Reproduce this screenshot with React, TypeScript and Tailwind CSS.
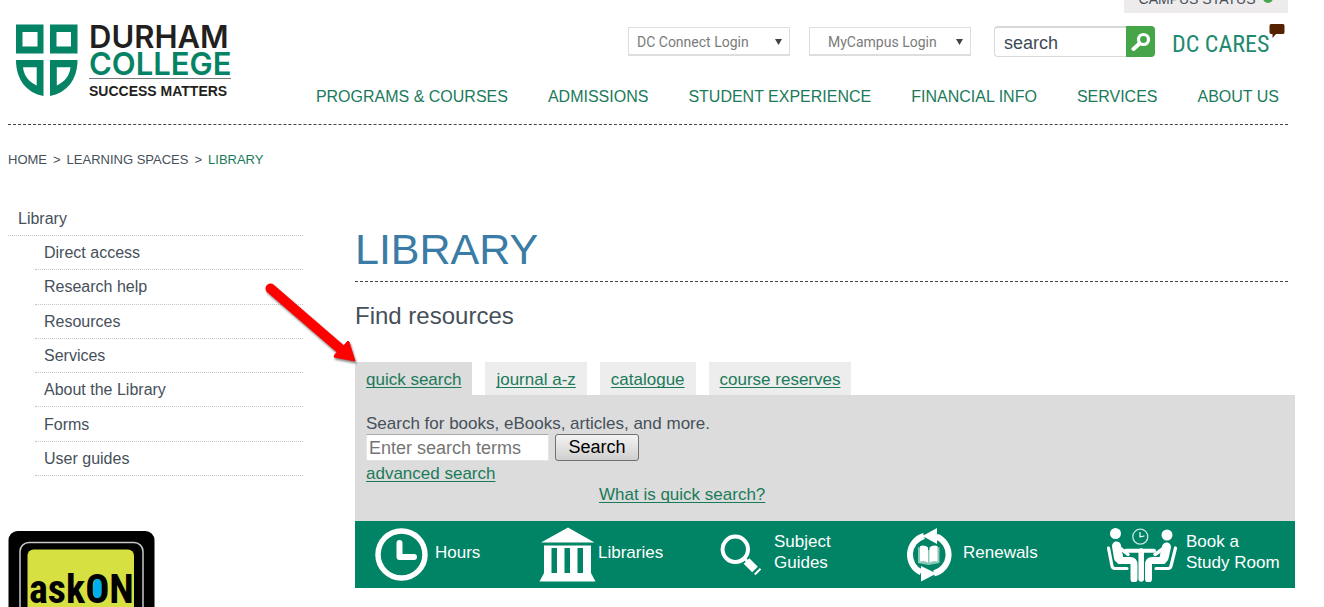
import type { ReactNode } from "react";

const navLinks = [
  "PROGRAMS & COURSES",
  "ADMISSIONS",
  "STUDENT EXPERIENCE",
  "FINANCIAL INFO",
  "SERVICES",
  "ABOUT US",
];

const sideLinks = [
  "Direct access",
  "Research help",
  "Resources",
  "Services",
  "About the Library",
  "Forms",
  "User guides",
];

const tabs = ["quick search", "journal a-z", "catalogue", "course reserves"];

const linkClass =
  "text-[#1b7a5a] underline underline-offset-2 [text-decoration-skip-ink:none]";

function Logo() {
  return (
    <a href="#" className="ml-[7px] mt-[10px] flex gap-[10px]">
      <svg width="64" height="74" viewBox="0 0 64 74" className="mt-px" fill="#058465" fillRule="evenodd">
        <path d="M1 0.5H28.5V29.5H1zM7.5 8V22.5H22.5V8z" />
        <path d="M35 0.5H62.5V29.5H35zM41.5 8V22.5H56V8z" />
        <path d="M1 36H28.5V72C12 69 1 56 1 36zM8 43.3C9 52 14 58 21.7 61.5V43.3z" />
        <path d="M62.5 36H35V72C51.5 69 62.5 56 62.5 36zM55.5 43.3C54.5 52 49.5 58 41.8 61.5V43.3z" />
      </svg>
      <div className="w-[142px] font-semibold text-[#231f20]">
        <div className="font-['Inter',sans-serif] text-[31px] leading-[27px]">DURHAM</div>
        <div className="font-['Inter',sans-serif] text-[31px] leading-[27px] text-[#058465]">COLLEGE</div>
        <div className="mt-px whitespace-nowrap border-t border-[#777] pt-1 text-[14px] font-bold leading-[16px]">
          SUCCESS MATTERS
        </div>
      </div>
    </a>
  );
}

function LoginSelect({ label, className }: { label: string; className: string }) {
  return (
    <div className="relative">
      <select
        aria-label={label}
        className={
          "h-[29px] w-[162px] appearance-none border border-b-2 border-[#dedede] bg-white pt-[3px] font-['Roboto',sans-serif] text-[14px] text-[#7b7b7b] " +
          className
        }
      >
        <option>{label}</option>
      </select>
      <svg
        width="7"
        height="6"
        viewBox="0 0 7 6"
        className="pointer-events-none absolute right-2 top-3"
        fill="#444"
      >
        <path d="M0 0H7L3.5 6z" />
      </svg>
    </div>
  );
}

function Header() {
  return (
    <header className="flex items-start justify-between border-b border-dashed border-[#444] pb-[15px]">
      <Logo />
      <div className="pt-[13px]">
        <div className="flex items-center justify-end">
          <LoginSelect label="DC Connect Login" className="pl-2" />
          <div className="ml-[19px]">
            <LoginSelect label="MyCampus Login" className="pl-[18px]" />
          </div>
          <form className="ml-[23px] flex">
            <input
              type="text"
              aria-label="search"
              defaultValue="search"
              className="h-[31px] w-[132px] rounded-l border border-r-0 border-t-2 border-[#d8d8d8] bg-white pl-[9px] pt-[2px] text-[18px] text-[#3d4a55]"
            />
            <button
              type="button"
              aria-label="Go"
              className="flex h-[31px] w-[29px] items-center justify-center rounded-r bg-[#45a548]"
            >
              <svg width="20" height="20" viewBox="0 0 20 20" fill="none" stroke="#fff">
                <circle cx="12.5" cy="7.5" r="5" strokeWidth="3.2" />
                <path d="M8 12L2.5 17" strokeWidth="4" strokeLinecap="round" />
              </svg>
            </button>
          </form>
          <a
            href="#"
            className="relative ml-[17px] w-[116px] pt-[5px] font-['Roboto_Condensed','Open_Sans_Condensed','Liberation_Sans_Narrow','Roboto',sans-serif] text-[24px] leading-[26px] text-[#1f8a70]"
          >
            DC CARES
            <svg
              width="16"
              height="14"
              viewBox="0 0 16 14"
              className="absolute -top-[2px] right-[3px]"
              fill="#552200"
            >
              <path d="M2 0H14Q15.500 0 15.500 2V8Q15.500 10 14 10H7L3.500 14V10H2Q0.500 10 0.500 8V2Q0.500 0 2 0z" />
            </svg>
          </a>
        </div>
        <nav className="mt-7 flex gap-10 pr-[9px] leading-6 text-[#1b7a5a]">
          {navLinks.map((l) => (
            <a key={l} href="#" className="whitespace-nowrap">
              {l}
            </a>
          ))}
        </nav>
      </div>
    </header>
  );
}

function Sidebar() {
  return (
    <aside className="w-[295px] shrink-0 pt-[31px]">
      <a
        href="#"
        className="block border-b border-dotted border-[#c4c4c4] pl-[10px] pt-[2px] leading-8"
      >
        Library
      </a>
      <ul className="ml-[27px] grid h-60 auto-rows-fr">
        {sideLinks.map((l) => (
          <li key={l} className="flex items-center border-b border-dotted border-[#c4c4c4] pl-[9px] pt-px">
            <a href="#">{l}</a>
          </li>
        ))}
      </ul>
      <a href="#" aria-label="askON" className="mt-[55px] block h-[76px] overflow-hidden">
        <svg width="147" height="120" viewBox="0 0 147 120">
          <rect x="0.500" y="0" width="146" height="120" rx="9" fill="#000" />
          <rect x="12" y="11.500" width="123" height="120" rx="9" fill="none" stroke="#c8c8c8" strokeWidth="1.500" />
          <rect x="19.500" y="18.500" width="106.500" height="100" rx="6" fill="#d6e040" />
          <ellipse cx="90" cy="58" rx="5" ry="12" fill="#00adef" />
          <text
            x="21"
            y="72"
            fontSize="40"
            fontWeight="700"
            className="font-['Liberation_Sans_Narrow','Roboto_Condensed','Roboto',sans-serif]"
          >
            askON
          </text>
        </svg>
      </a>
    </aside>
  );
}

function ClockIcon() {
  return (
    <svg width="53" height="53" viewBox="0 0 53 53" fill="none" stroke="#fff" strokeWidth="6">
      <circle cx="26.500" cy="26.500" r="23.500" strokeWidth="5.500" />
      <path d="M24.500 15V29H39" strokeLinecap="round" strokeLinejoin="round" />
    </svg>
  );
}

function LibraryIcon() {
  return (
    <svg width="57" height="55" viewBox="0 0 57 55" fill="#fff">
      <path d="M29 0.500L55.500 15.500H2z" />
      <path d="M5 18.500H52V21H5zM5 20H12.500V47H5zM18 20H25.500V47H18zM31 20H38.500V47H31zM44 20H52V47H44z" />
      <path d="M5 46H52L56.500 54.500H0.500z" />
    </svg>
  );
}

function GlassIcon() {
  return (
    <svg width="41" height="41" viewBox="0 0 41 41" fill="none" stroke="#fff">
      <circle cx="15.300" cy="15.300" r="12.700" strokeWidth="4" />
      <path d="M26.500 27L35 35.500" strokeWidth="8" />
      <path d="M34.800 40.500L40.500 34.800" strokeWidth="2" />
      <path d="M24 24L28 28" strokeWidth="3" />
    </svg>
  );
}

function RenewIcon() {
  return (
    <svg width="46" height="54" viewBox="0 0 46 54">
      <g fill="none" stroke="#fff" strokeWidth="6">
        <path d="M18 8A19.500 19.500 0 0 0 15 44.300" />
        <path d="M28 45.400A19.500 19.500 0 0 0 30.500 8.500" />
      </g>
      <path d="M16.500 8L31 0V16z" fill="#fff" />
      <path d="M30.500 45.500L15 38V53.500z" fill="#fff" />
      <path d="M12 19L22.500 22L33.500 19V35L22.500 37L12 35z" fill="#8cc9b8" />
      <path d="M14 18Q19 16.500 22 19.500V34.500Q18 32 14 33.500z" fill="#fff" />
      <path d="M31.500 18Q26.500 16.500 23.500 19.500V34.500Q27.500 32 31.500 33.500z" fill="#fff" />
    </svg>
  );
}

function StudyIcon() {
  return (
    <svg width="73" height="54" viewBox="0 0 73 54" fill="none" stroke="#fff" strokeLinecap="round" strokeLinejoin="round">
      <circle cx="9.500" cy="5.500" r="5.500" fill="#fff" stroke="none" />
      <circle cx="61" cy="7" r="5.500" fill="#fff" stroke="none" />
      <circle cx="34.300" cy="8.700" r="7.500" strokeWidth="1.300" opacity="0.800" />
      <path d="M34 4.500V9L38 8" strokeWidth="1.200" />
      <path d="M2.500 20L6 38Q6.500 40.500 9 40.500H21" strokeWidth="3.200" />
      <path d="M69.500 20L65 38Q64.500 40.500 62 40.500H50" strokeWidth="3.200" />
      <path d="M11.500 19L14 32.500H24Q28 32.500 28 37V51" strokeWidth="7" />
      <path d="M10.500 18L12.500 30" strokeWidth="9" />
      <path d="M59.500 20L57 32.500H46.500Q42.500 32.500 42.500 37V51" strokeWidth="7" />
      <path d="M60.500 19L58 30" strokeWidth="9" />
      <path d="M14 20L22 26.500" strokeWidth="3.500" />
      <path d="M58 20L49 26.500" strokeWidth="3.500" />
      <path d="M20 22.700H48" strokeWidth="4" />
      <path d="M35.200 23V51" strokeWidth="5.500" />
    </svg>
  );
}

function BarLink({ icon, className, children }: { icon: ReactNode; className: string; children: ReactNode }) {
  return (
    <a href="#" className={"flex items-center whitespace-nowrap " + className}>
      {icon}
      <span className="pb-[5px]">{children}</span>
    </a>
  );
}

export default function App() {
  return (
    <div className="relative bg-white pl-2 pr-9 font-['Liberation_Sans',Arial,sans-serif] text-[16px] text-[#46505a]">
      <div className="ml-auto flex h-[13px] w-[164px] items-end justify-center gap-2 overflow-hidden bg-[#edebeb] pb-1 text-[14px] leading-5">
        <span>CAMPUS STATUS</span>
        <span className="mb-[6px] h-[10px] w-[10px] shrink-0 rounded-full bg-[#45a548]" />
      </div>
      <Header />

      <div className="mt-[25px] flex gap-[6px] text-[13px] leading-5">
        <a href="#">HOME</a>
        <span>&gt;</span>
        <a href="#">LEARNING SPACES</a>
        <span>&gt;</span>
        <a href="#" className="text-[#1b7a5a]">
          LIBRARY
        </a>
      </div>

      <div className="flex gap-[52px]">
        <Sidebar />
        <main className="min-w-0 flex-1 pt-[55px]">
          <h1 className="border-b border-dashed border-[#444] pb-2 text-[43px] leading-[48px] text-[#3a7ca5]">
            LIBRARY
          </h1>
          <h2 className="mt-[18px] text-[24px] leading-8">Find resources</h2>

          <div className="-mr-[7px] mt-[30px] text-[17px] leading-[21px]">
            <div className="flex gap-[13px]">
              {tabs.map((t, i) => (
                <a
                  key={t}
                  href="#"
                  className={
                    "px-[11px] pb-[5px] pt-[7px] " + linkClass + (i === 0 ? " bg-[#dcdcdc]" : " bg-[#ededed]")
                  }
                >
                  {t}
                </a>
              ))}
            </div>
            <div className="bg-[#dcdcdc] px-[11px] pb-4 pt-[18px]">
              <label htmlFor="terms" className="block">
                Search for books, eBooks, articles, and more.
              </label>
              <div className="flex gap-[6px] text-[18px]">
                <input
                  id="terms"
                  type="text"
                  placeholder="Enter search terms"
                  className="h-[27px] w-[183px] border border-[#e4e4e4] border-t-[#ababab] bg-white px-[2px] pt-px placeholder:text-[#757575]"
                />
                <button
                  type="button"
                  className="h-[27px] w-[84px] rounded-[3px] border border-[#707070] bg-linear-to-b from-[#f4f4f4] to-[#cfcfcf] text-black"
                >
                  Search
                </button>
              </div>
              <a href="#" className={"mt-[2px] block w-fit " + linkClass}>
                advanced search
              </a>
              <a href="#" className={"ml-[233px] block w-fit " + linkClass}>
                What is quick search?
              </a>
            </div>
            <div className="grid h-[67px] grid-cols-[164px_181px_186px_200px_1fr] bg-[#008465] pl-5 text-white">
              <BarLink icon={<ClockIcon />} className="gap-[7px]">
                Hours
              </BarLink>
              <BarLink icon={<LibraryIcon />} className="gap-[2px]">
                Libraries
              </BarLink>
              <BarLink icon={<GlassIcon />} className="gap-[13px]">
                Subject
                <br />
                Guides
              </BarLink>
              <BarLink icon={<RenewIcon />} className="gap-[11px]">
                Renewals
              </BarLink>
              <BarLink icon={<StudyIcon />} className="gap-[7px]">
                Book a
                <br />
                Study Room
              </BarLink>
            </div>
          </div>
        </main>
      </div>

      {/* red pointer at the quick search tab */}
      <svg
        width="100"
        height="90"
        viewBox="0 0 100 90"
        className="pointer-events-none absolute left-[262px] top-[280px] drop-shadow-[1px_2px_1px_rgba(0,0,0,0.5)]"
      >
        <path d="M8.500 8.500L82 72" stroke="#fe0000" strokeWidth="10" strokeLinecap="round" />
        <path d="M93 81L72 77Q72 74 77 71L85 62Q86 60 87 62z" fill="#fe0000" stroke="#fe0000" strokeWidth="1" strokeLinejoin="round" />
      </svg>
    </div>
  );
}
